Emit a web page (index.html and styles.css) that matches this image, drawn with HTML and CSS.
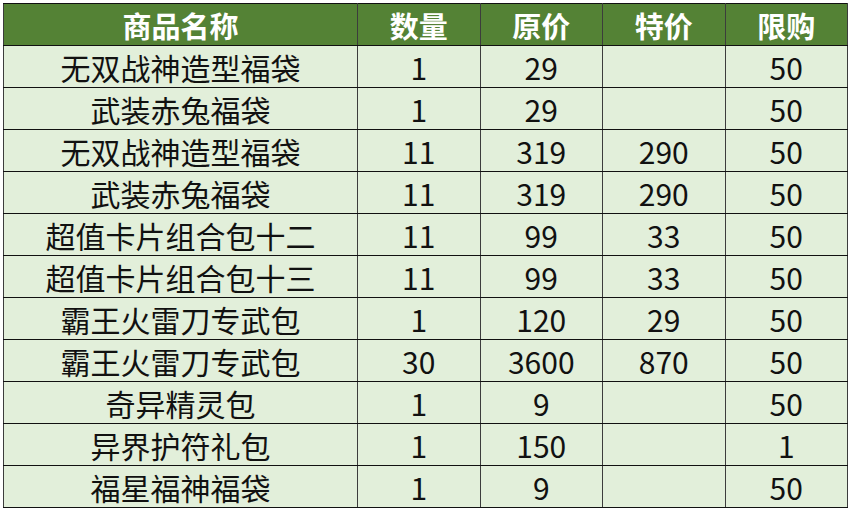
FILE: index.html
```html
<!DOCTYPE html>
<html lang="zh-CN">
<head>
<meta charset="utf-8">
<title>商品列表</title>
<link rel="stylesheet" href="styles.css">
</head>
<body>
<div class="sheet">
<table class="goods">
  <colgroup>
    <col class="c-name"><col class="c-num"><col class="c-num"><col class="c-num"><col class="c-num">
  </colgroup>
  <thead>
    <tr><th>商品名称</th><th>数量</th><th>原价</th><th>特价</th><th>限购</th></tr>
  </thead>
  <tbody>
    <tr><td>无双战神造型福袋</td><td>1</td><td>29</td><td></td><td>50</td></tr>
    <tr><td>武装赤兔福袋</td><td>1</td><td>29</td><td></td><td>50</td></tr>
    <tr><td>无双战神造型福袋</td><td>11</td><td>319</td><td>290</td><td>50</td></tr>
    <tr><td>武装赤兔福袋</td><td>11</td><td>319</td><td>290</td><td>50</td></tr>
    <tr><td>超值卡片组合包十二</td><td>11</td><td>99</td><td>33</td><td>50</td></tr>
    <tr><td>超值卡片组合包十三</td><td>11</td><td>99</td><td>33</td><td>50</td></tr>
    <tr><td>霸王火雷刀专武包</td><td>1</td><td>120</td><td>29</td><td>50</td></tr>
    <tr><td>霸王火雷刀专武包</td><td>30</td><td>3600</td><td>870</td><td>50</td></tr>
    <tr><td>奇异精灵包</td><td>1</td><td>9</td><td></td><td>50</td></tr>
    <tr><td>异界护符礼包</td><td>1</td><td>150</td><td></td><td>1</td></tr>
    <tr><td>福星福神福袋</td><td>1</td><td>9</td><td></td><td>50</td></tr>
  </tbody>
</table>
</div>
</body>
</html>
```
FILE: styles.css
```css
html, body {
  margin: 0;
  padding: 0;
  background: #ffffff;
}
.sheet {
  padding: 3px 0 0 3px;
}
.goods {
  border-collapse: collapse;
  table-layout: fixed;
  width: 845px;
  font-family: "Noto Sans CJK SC", "Noto Sans", sans-serif;
  font-size: 30px;
  color: #111;
}
.c-name { width: 354px; }
.c-num { width: 122.5px; }
.goods th, .goods td {
  height: 41px;
  padding: 0;
  text-align: center;
  vertical-align: middle;
  line-height: 40px;
  border-left: 1px solid #3c3c3c;
  border-right: 1px solid #3c3c3c;
  border-top: 1px solid #111;
  border-bottom: 1px solid #111;
  white-space: nowrap;
  overflow: hidden;
}
.goods th {
  background: #548235;
  color: #ffffff;
  font-weight: 700;
  font-size: 29px;
}
.goods td {
  background: #e2efda;
}
```
